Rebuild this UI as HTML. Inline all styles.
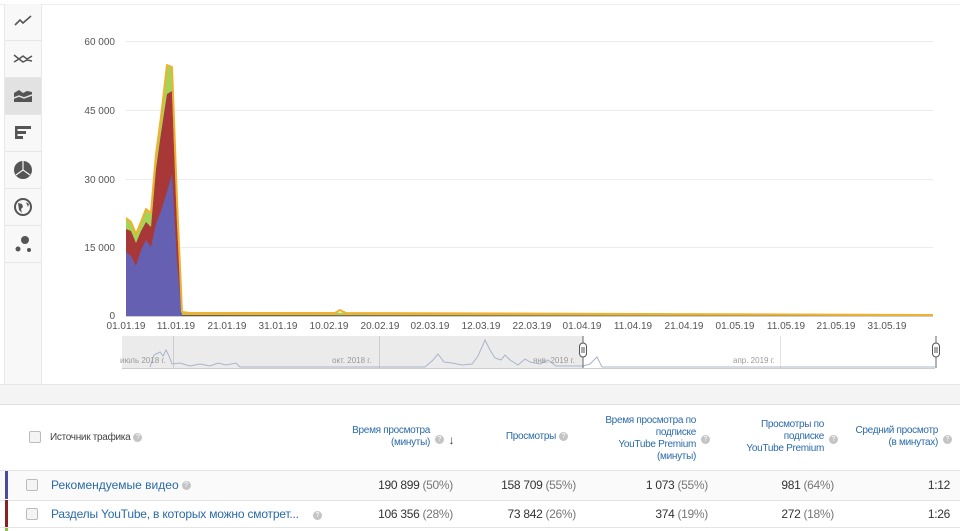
<!DOCTYPE html>
<html><head><meta charset="utf-8"><style>
body{margin:0;width:960px;height:531px;overflow:hidden;background:#fff;font-family:"Liberation Sans",Arial,sans-serif;position:relative}
.abs{position:absolute}
.side{left:4px;top:4px;width:36px;height:380px;background:#f8f8f8;border-left:1px solid #e8e8e8;border-right:1px solid #e8e8e8}
.btn{position:absolute;left:0;width:36px;height:36px;border-bottom:1px solid #e6e6e6}
.q{display:inline-block;width:9px;height:9px;border-radius:50%;background:#c4c4c4;color:#fff;font-size:7px;line-height:9px;text-align:center;vertical-align:middle;margin-left:3px}
.hd{position:absolute;font-size:10px;color:#2a6aa8;text-align:right;line-height:12px;letter-spacing:-0.3px}
.cb{position:absolute;width:10px;height:10px;border:1px solid #bbb;border-radius:2px;background:#f4f4f4}
.num{position:absolute;font-size:12px;color:#333;text-align:right;letter-spacing:-0.3px}
.num span{color:#777}
</style></head><body>
<div class="abs" style="left:0;top:0;width:960px;height:4px;border-bottom:1px solid #eee"></div>
<div class="abs side">
 <div class="btn" style="top:0"><svg width="36" height="36"><path d="M10 21l5-5 3 3 8-7" fill="none" stroke="#555" stroke-width="1.6"/></svg></div>
 <div class="btn" style="top:37px"><svg width="36" height="36"><path d="M9 14l5 4 4-3 4 3 5-3M9 21l5-3 4 3 4-2 5 1" fill="none" stroke="#555" stroke-width="1.5"/></svg></div>
 <div class="btn" style="top:74px;background:#e2e2e2"><svg width="36" height="36"><path d="M9 15l5-3 4 3 4-2 5 1v10H9z" fill="#555"/><path d="M9 20l5-2 5 2 8-3" fill="none" stroke="#e2e2e2" stroke-width="1.5"/></svg></div>
 <div class="btn" style="top:111px"><svg width="36" height="36"><rect x="10" y="11" width="2.5" height="13" fill="#555"/><rect x="12" y="11" width="14" height="3" fill="#555"/><rect x="12" y="16" width="9" height="3" fill="#555"/><rect x="12" y="21" width="6" height="3" fill="#555"/></svg></div>
 <div class="btn" style="top:148px"><svg width="36" height="36"><circle cx="18" cy="18" r="9" fill="#555"/><path d="M18 9v9l7 5M18 18l-7 5" stroke="#f8f8f8" stroke-width="1.2" fill="none"/></svg></div>
 <div class="btn" style="top:185px"><svg width="36" height="36"><circle cx="18" cy="18" r="8" fill="none" stroke="#555" stroke-width="2"/><path d="M13 14l4 1 1 3-2 2 1 4-3-3zM21 13l3 2-1 3" fill="#555"/></svg></div>
 <div class="btn" style="top:222px"><svg width="36" height="36"><circle cx="20" cy="14" r="4" fill="#555"/><circle cx="13" cy="23" r="2.5" fill="#555"/><circle cx="24" cy="24" r="2" fill="#555"/></svg></div>
</div>
<svg class="abs" style="left:0;top:0" width="960" height="384">
 <g stroke="#ececec" stroke-width="1"><line x1="126" y1="41.5" x2="933" y2="41.5"/><line x1="126" y1="110.5" x2="933" y2="110.5"/><line x1="126" y1="179.5" x2="933" y2="179.5"/><line x1="126" y1="247.5" x2="933" y2="247.5"/></g>
 <g font-size="10" fill="#555" text-anchor="end"><text x="115" y="45">60 000</text><text x="115" y="114">45 000</text><text x="115" y="183">30 000</text><text x="115" y="251">15 000</text><text x="115" y="319">0</text></g>
 <polygon fill="#a4d455" points="126,219 131,223 136,235 141,223 146,210 151,214 156,155 161,118 167,66 172,68 177,201 182,312 933,315 933,316 126,316"/>
 <polygon fill="#a83838" points="126,229 131,231 136,243 141,231 146,222 151,227 156,169 161,133 167,94 172,91 177,224 182,315 933,316 126,316"/>
 <polygon fill="#6660b2" points="126,252 131,256 136,266 141,250 146,240 151,247 156,224 161,211 167,192 172,174 177,261 182,316 126,316"/>
 <polyline fill="none" stroke="#f0b030" stroke-width="2" stroke-linejoin="round" points="126,218 131,222 136,234 141,222 146,209 151,213 156,154 161,117 167,65 172,67 177,200 182,312 190,313 335,313 340,310 346,313 933,315"/>
 <line x1="126" y1="316.5" x2="933" y2="316.5" stroke="#ccc"/>
 <g font-size="10" fill="#555" text-anchor="middle"><text x="126" y="329">01.01.19</text><text x="176" y="329">11.01.19</text><text x="227" y="329">21.01.19</text><text x="278" y="329">31.01.19</text><text x="329" y="329">10.02.19</text><text x="380" y="329">20.02.19</text><text x="430" y="329">02.03.19</text><text x="481" y="329">12.03.19</text><text x="532" y="329">22.03.19</text><text x="582" y="329">01.04.19</text><text x="633" y="329">11.04.19</text><text x="684" y="329">21.04.19</text><text x="735" y="329">01.05.19</text><text x="786" y="329">11.05.19</text><text x="836" y="329">21.05.19</text><text x="887" y="329">31.05.19</text></g>
 <rect x="122" y="336" width="461" height="32" fill="#ebebeb"/>
 <line x1="173.5" y1="336" x2="173.5" y2="368" stroke="#ccc"/><line x1="379.5" y1="336" x2="379.5" y2="368" stroke="#ccc"/><line x1="780.5" y1="336" x2="780.5" y2="368" stroke="#e4e4e4"/>
 <polyline fill="none" stroke="#a8b4cc" stroke-width="1" points="150,367 154,355 160,352 163,356 166,350 169,356 172,364 180,363 190,366 200,364 210,366 218,363 226,365 236,363 240,367 425,367 433,360 438,354 444,362 452,363 462,365 472,364 478,356 485,340 490,350 495,358 501,360 505,355 510,360 518,365 525,359 530,362 540,364 548,360 556,366 583,366 590,364 597,357 602,367 935,367"/>
 <line x1="122" y1="368.5" x2="935" y2="368.5" stroke="#ccc"/>
 <g font-size="8" fill="#999"><text x="120" y="363">июль 2018 г.</text><text x="332" y="363">окт. 2018 г.</text><text x="533" y="363">янв. 2019 г.</text><text x="733" y="363">апр. 2019 г.</text></g>
 <line x1="583" y1="336" x2="583" y2="368" stroke="#666"/><rect x="579.5" y="343" width="7" height="14" rx="3.5" fill="#fff" stroke="#555"/><path d="M582 347v6M584 347v6" stroke="#555"/>
 <line x1="936" y1="336" x2="936" y2="368" stroke="#666"/><rect x="932.5" y="343" width="7" height="14" rx="3.5" fill="#fff" stroke="#555"/><path d="M935 347v6M937 347v6" stroke="#555"/>
</svg>
<div class="abs" style="left:0;top:384px;width:960px;height:20px;background:#f4f4f4;border-top:1px solid #e6e6e6"></div>
<div class="abs" style="left:0;top:404px;width:960px;height:1px;background:#e0e0e0"></div>
<div class="cb" style="left:29px;top:431px"></div>
<div class="abs" style="left:50px;top:432px;font-size:10px;color:#444;letter-spacing:-0.3px">Источник трафика<span class="q">?</span></div>
<div class="hd" style="right:530px;top:425px">Время просмотра<br>(минуты)</div><div class="abs" style="left:432px;top:431px"><span class="q">?</span> <span style="font-size:12px;color:#333">↓</span></div>
<div class="hd" style="right:392px;top:431px">Просмотры<span class="q">?</span></div>
<div class="hd" style="right:264px;top:415px">Время просмотра по<br>подписке<br>YouTube Premium<br>(минуты)</div><div class="abs" style="left:698px;top:431px"><span class="q">?</span></div>
<div class="hd" style="right:136px;top:419px">Просмотры по<br>подписке<br>YouTube Premium</div><div class="abs" style="left:826px;top:431px"><span class="q">?</span></div>
<div class="hd" style="right:22px;top:425px">Средний просмотр<br>(в минутах)</div><div class="abs" style="left:940px;top:431px"><span class="q">?</span></div>
<div class="abs" style="left:0;top:470px;width:960px;height:29px;background:#fafafa;border-top:1px solid #e4e4e4;border-bottom:1px solid #e4e4e4"></div>
<div class="abs" style="left:5px;top:471px;width:3px;height:28px;background:#4a4aa0"></div>
<div class="abs" style="left:5px;top:500px;width:3px;height:27px;background:#8a2020"></div>
<div class="abs" style="left:0;top:527px;width:960px;height:1px;background:#e4e4e4"></div>
<div class="abs" style="left:5px;top:528px;width:3px;height:3px;background:#8bc34a"></div>
<div class="cb" style="left:26px;top:479px"></div>
<div class="cb" style="left:26px;top:508px"></div>
<div class="abs" style="left:51px;top:478px;font-size:12px;color:#2a6aa8">Рекомендуемые видео<span class="q">?</span></div>
<div class="abs" style="left:51px;top:507px;font-size:12px;color:#2a6aa8;letter-spacing:-0.2px">Разделы YouTube, в которых можно смотрет...</div><div class="abs" style="left:310px;top:507px"><span class="q">?</span></div>
<div class="num" style="right:507px;top:478px">190 899 <span>(50%)</span></div>
<div class="num" style="right:507px;top:507px">106 356 <span>(28%)</span></div>
<div class="num" style="right:384px;top:478px">158 709 <span>(55%)</span></div>
<div class="num" style="right:384px;top:507px">73 842 <span>(26%)</span></div>
<div class="num" style="right:252px;top:478px">1 073 <span>(55%)</span></div>
<div class="num" style="right:252px;top:507px">374 <span>(19%)</span></div>
<div class="num" style="right:126px;top:478px">981 <span>(64%)</span></div>
<div class="num" style="right:126px;top:507px">272 <span>(18%)</span></div>
<div class="num" style="right:10px;top:478px">1:12</div>
<div class="num" style="right:10px;top:507px">1:26</div>
</body></html>
